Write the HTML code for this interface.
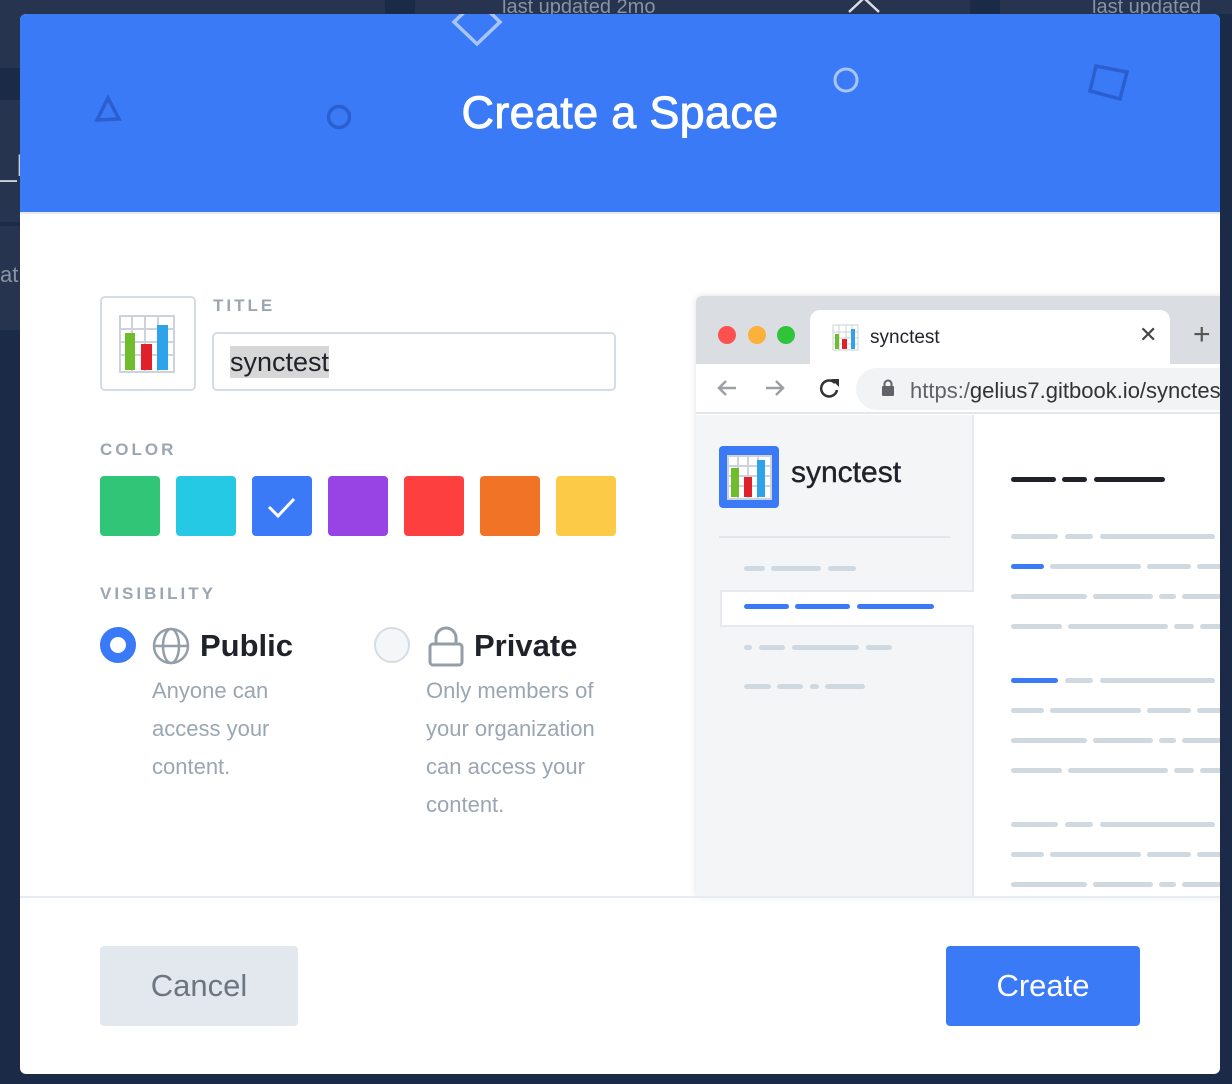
<!DOCTYPE html>
<html><head><meta charset="utf-8"><style>
*{box-sizing:border-box;margin:0;padding:0}
body{width:1232px;height:1084px;background:#1b2a47;font-family:"Liberation Sans",Arial,sans-serif;position:relative;overflow:hidden}
.bgp{position:absolute;background:#26344f}
.modal{position:absolute;left:20px;top:14px;width:1200px;height:1060px;background:#fff;border-radius:6px;overflow:hidden}
.hdr{position:absolute;left:0;top:0;width:1200px;height:200px;background:#3b7af7;border-bottom:2px solid #e6ecf1}
.hdr h1{position:absolute;left:0;right:0;top:73px;text-align:center;color:#fff;font-size:45px;font-weight:normal;-webkit-text-stroke:0.9px #fff;letter-spacing:0.3px}
.lbl{position:absolute;font-size:17px;font-weight:bold;letter-spacing:3px;color:#9aa6b2}
.sw{position:absolute;top:462px;width:60px;height:60px;border-radius:4px}
.ab{position:absolute}
.desc{position:absolute;font-size:22px;line-height:38px;color:#9aa6b2}
.ln{position:absolute;height:5px;border-radius:3px;background:#d0d9e0}
.bl{background:#3b7af7}
.bk{background:#1f2329}
</style></head><body>
<div class="bgp" style="left:0;top:0;width:385px;height:68px"></div>
<div class="bgp" style="left:415px;top:0;width:555px;height:14px"></div>
<div class="bgp" style="left:1000px;top:0;width:232px;height:14px"></div>
<div class="bgp" style="left:0;top:100px;width:20px;height:122px"></div>
<div class="bgp" style="left:0;top:226px;width:20px;height:104px"></div>
<div style="position:absolute;left:0;top:150px;color:#c9d0da;font-size:30px">_b</div>
<div style="position:absolute;left:0;top:262px;color:#8893a3;font-size:22px">at</div>
<div style="position:absolute;left:502px;top:-4px;color:#8893a3;font-size:20px">last updated 2mo</div>
<div style="position:absolute;left:1092px;top:-4px;color:#8893a3;font-size:20px">last updated</div>
<svg class="ab" style="left:846px;top:0" width="36" height="16"><path d="M3 12 L18 -2 L33 12" fill="none" stroke="#d8dde6" stroke-width="2.5"/></svg>

<div class="modal">
 <div class="hdr">
  <svg class="ab" style="left:0;top:0" width="1200" height="200">
   <path d="M434 8 L457 -14 L480 8 L457 30 Z" fill="none" stroke="#a9c6fb" stroke-width="3.5"/>
   <circle cx="826" cy="66" r="11" fill="none" stroke="#a9c6fb" stroke-width="3"/>
   <path d="M1076 52 L1107 58 L1100 85 L1070 77 Z" fill="none" stroke="#2b5fd0" stroke-width="3.5"/>
   <path d="M77 106 L88 84 L99 105 Z" fill="none" stroke="#2b5fd0" stroke-width="3.5"/>
   <circle cx="319" cy="103" r="10.5" fill="none" stroke="#2b5fd0" stroke-width="3.5"/>
  </svg>
  <h1>Create a Space</h1>
 </div>
 <div class="ab" style="left:80px;top:282px;width:96px;height:95px;border:2px solid #d4dde5;border-radius:5px"></div>
 <svg class="ab" style="left:99px;top:301px" width="58" height="58">
  <rect x="1" y="1" width="54" height="56" fill="#fff" stroke="#ccd3da" stroke-width="2"/>
  <path d="M13 2V56M26 2V56M39 2V56M2 14H55M2 27H55M2 40H55" stroke="#ccd3da" stroke-width="2"/>
  <rect x="6" y="18" width="10" height="37" fill="#6fbd2c"/>
  <rect x="22" y="29" width="11" height="26" fill="#e0202a"/>
  <rect x="38" y="10" width="11" height="45" fill="#2ea3ea"/>
 </svg>
 <div class="lbl" style="left:193px;top:282px">TITLE</div>
 <div class="ab" style="left:192px;top:318px;width:404px;height:59px;border:2px solid #d4dde5;border-radius:5px"></div>
 <div class="ab" style="left:210px;top:332px;background:#d7d7d7;font-size:27px;color:#1f2329;height:32px;line-height:32px">synctest</div>
 <div class="lbl" style="left:80px;top:426px">COLOR</div>
 <div class="sw" style="left:80px;background:#31c577"></div>
 <div class="sw" style="left:156px;background:#26c9e3"></div>
 <div class="sw" style="left:232px;background:#3b7af7"><svg width="60" height="60"><path d="M17 31 L26 40 L42 23" fill="none" stroke="#fff" stroke-width="3"/></svg></div>
 <div class="sw" style="left:308px;background:#9843e3"></div>
 <div class="sw" style="left:384px;background:#fe3f40"></div>
 <div class="sw" style="left:460px;background:#f17426"></div>
 <div class="sw" style="left:536px;background:#fdca47"></div>
 <div class="lbl" style="left:80px;top:570px">VISIBILITY</div>
 <div class="ab" style="left:80px;top:613px;width:36px;height:36px;border-radius:50%;border:10px solid #3b7af7;background:#fff"></div>
 <svg class="ab" style="left:132px;top:612px" width="40" height="40"><g fill="none" stroke="#939ea9" stroke-width="2.5"><circle cx="19" cy="20" r="17"/><ellipse cx="19" cy="20" rx="8" ry="17"/><path d="M2 20H36"/></g></svg>
 <div class="ab" style="left:180px;top:614px;font-size:31px;font-weight:bold;color:#1f2329">Public</div>
 <div class="desc" style="left:132px;top:658px">Anyone can<br>access your<br>content.</div>
 <div class="ab" style="left:354px;top:613px;width:36px;height:36px;border-radius:50%;border:2px solid #d4dde5;background:#f4f6f8"></div>
 <svg class="ab" style="left:406px;top:612px" width="40" height="42"><g fill="none" stroke="#939ea9" stroke-width="3"><rect x="4" y="18" width="32" height="21" rx="3"/><path d="M10 18V12a10 10 0 0 1 20 0V18"/></g></svg>
 <div class="ab" style="left:454px;top:614px;font-size:31px;font-weight:bold;color:#1f2329">Private</div>
 <div class="desc" style="left:406px;top:658px">Only members of<br>your organization<br>can access your<br>content.</div>

 <div class="ab" style="left:676px;top:282px;width:540px;height:600px;background:#fff;box-shadow:0 0 8px rgba(0,0,0,0.12);border-radius:6px 0 0 0;overflow:hidden">
  <div class="ab" style="left:0;top:0;width:540px;height:68px;background:#dadde1"></div>
  <div class="ab" style="left:22px;top:30px;width:18px;height:18px;border-radius:50%;background:#fd504f"></div>
  <div class="ab" style="left:52px;top:30px;width:18px;height:18px;border-radius:50%;background:#fcb13a"></div>
  <div class="ab" style="left:81px;top:30px;width:18px;height:18px;border-radius:50%;background:#2fc43a"></div>
  <div class="ab" style="left:114px;top:14px;width:360px;height:54px;background:#fff;border-radius:10px 10px 0 0"></div>
  <svg class="ab" style="left:136px;top:28px" width="27" height="27"><rect x="1" y="1" width="25" height="25" fill="#fff" stroke="#ccd3da"/><path d="M7 1V26M14 1V26M20 1V26M1 8H26M1 14H26M1 20H26" stroke="#ccd3da"/><rect x="3" y="10" width="4" height="15" fill="#6fbd2c"/><rect x="10" y="15" width="5" height="10" fill="#e0202a"/><rect x="19" y="5" width="4" height="20" fill="#2ea3ea"/></svg>
  <div class="ab" style="left:174px;top:31px;font-size:19px;color:#1f2329">synctest</div>
  <div class="ab" style="left:443px;top:26px;font-size:22px;color:#444">✕</div>
  <div class="ab" style="left:497px;top:22px;font-size:30px;color:#555">+</div>
  <div class="ab" style="left:0;top:68px;width:540px;height:50px;background:#fff;border-bottom:2px solid #e3e6ea"></div>
  <svg class="ab" style="left:18px;top:80px" width="130" height="24"><g fill="none" stroke-width="2.5"><path d="M22 12H5M12 5L5 12L12 19" stroke="#9aa0a6"/><path d="M52 12H69M62 5L69 12L62 19" stroke="#9aa0a6"/><path d="M121 7A8 8 0 1 0 123 14" stroke="#333"/></g><path d="M117 3L125 3L125 11Z" fill="#333"/></svg>
  <div class="ab" style="left:160px;top:72px;width:400px;height:42px;border-radius:21px;background:#f1f3f4"></div>
  <svg class="ab" style="left:185px;top:83px" width="14" height="18"><rect x="1" y="7" width="12" height="10" rx="1" fill="#5f6368"/><path d="M3.5 8V5a3.5 3.5 0 0 1 7 0V8" fill="none" stroke="#5f6368" stroke-width="2"/></svg>
  <div class="ab" style="left:214px;top:82px;font-size:22px;color:#333;white-space:nowrap"><span style="color:#5f6368">https:/</span>gelius7.gitbook.io/synctest</div>
  <div class="ab" style="left:0;top:119px;width:278px;height:481px;background:#f4f5f7;border-right:2px solid #e6e9ed"></div>
  <div class="ab" style="left:23px;top:150px;width:60px;height:62px;border-radius:4px;background:#3b7af7"></div>
  <svg class="ab" style="left:31px;top:159px" width="45" height="45"><rect x="1" y="1" width="43" height="43" fill="#fff" stroke="#ccd3da" stroke-width="2"/><path d="M11 1V44M21 1V44M31 1V44M1 11H44M1 21H44M1 31H44" stroke="#ccd3da" stroke-width="2"/><rect x="4" y="13" width="8" height="29" fill="#6fbd2c"/><rect x="17" y="22" width="8" height="20" fill="#e0202a"/><rect x="30" y="5" width="8" height="37" fill="#2ea3ea"/></svg>
  <div class="ab" style="left:95px;top:160px;font-size:30px;color:#1f2329;-webkit-text-stroke:0.4px #1f2329">synctest</div>
  <div class="ab" style="left:23px;top:240px;width:231px;height:2px;background:#e3e6ea"></div>
  <div class="ab" style="left:24px;top:294px;width:254px;height:37px;background:#fff;border:2px solid #e6e9ed;border-right:none"></div>
 </div>
 <div class="ab" style="left:0;top:882px;width:1200px;height:2px;background:#e6ecf1"></div>
 <div class="ab" style="left:80px;top:932px;width:198px;height:80px;border-radius:4px;background:#e3e8ee;color:#6c7580;font-size:31px;text-align:center;line-height:80px">Cancel</div>
 <div class="ab" style="left:926px;top:932px;width:194px;height:80px;border-radius:4px;background:#3b7af7;color:#fff;font-size:31px;text-align:center;line-height:80px">Create</div>
</div>
<div id="abs"></div>
<script>
var h='';
function L(x1,x2,y,c){h+='<div class="ln '+(c||'')+'" style="position:absolute;left:'+x1+'px;width:'+(x2-x1)+'px;top:'+(y-2)+'px"></div>';}
L(1011,1056,479,'bk');L(1062,1087,479,'bk');L(1094,1165,479,'bk');
var A=[[1011,1058],[1065,1093],[1100,1215]],B=[[1011,1044],[1050,1141],[1147,1191],[1197,1225]],C=[[1011,1087],[1093,1153],[1159,1176],[1182,1225]],D=[[1011,1062],[1068,1168],[1174,1194],[1200,1225]];
function R(p,y,fb){p.forEach(function(s,i){L(s[0],s[1],y,(fb&&i==0)?'bl':'');});}
R(A,536);R(B,566,1);R(C,596);R(D,626);R(A,680,1);R(B,710);R(C,740);R(D,770);R(A,824);R(B,854);R(C,884);
[[744,765],[771,821],[828,856]].forEach(function(s){L(s[0],s[1],568)});
[[744,789],[795,850],[857,934]].forEach(function(s){L(s[0],s[1],606,'bl')});
[[744,752],[759,785],[792,859],[866,892]].forEach(function(s){L(s[0],s[1],647)});
[[744,771],[777,803],[810,819],[825,865]].forEach(function(s){L(s[0],s[1],686)});
document.getElementById('abs').innerHTML=h;
</script>
<div style="position:absolute;left:1220px;top:290px;width:12px;height:610px;background:#1b2a47"></div>
</body></html>
